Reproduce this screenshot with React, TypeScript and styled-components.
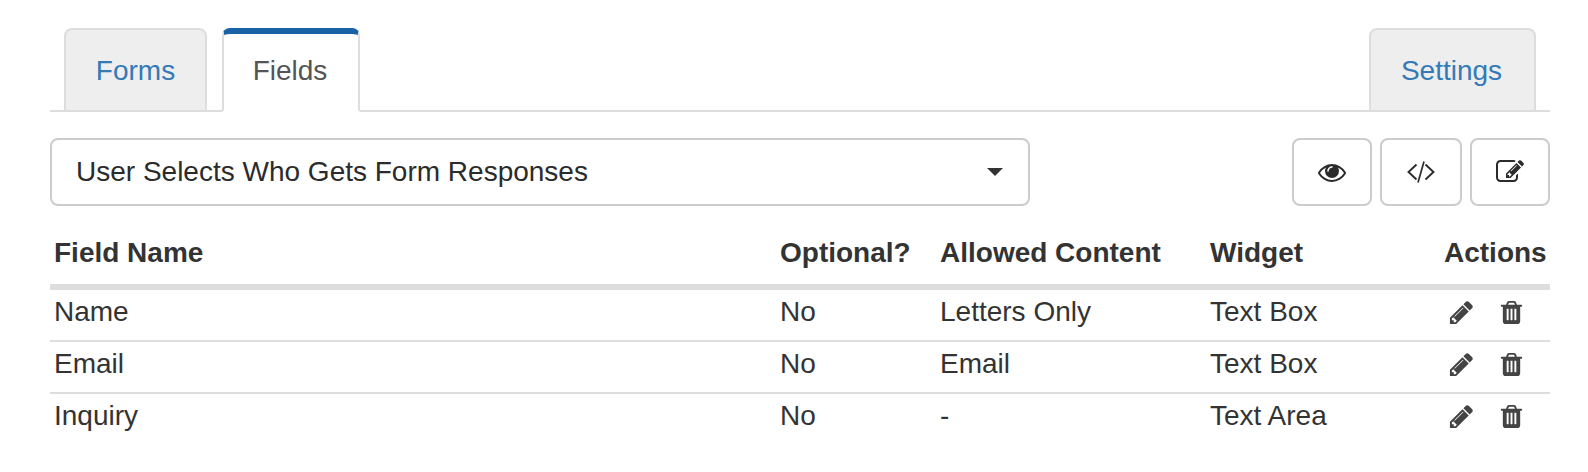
import React from 'react';
import styled, { createGlobalStyle } from 'styled-components';

const GlobalStyle = createGlobalStyle`
  html, body {
    margin: 0;
    padding: 0;
    background: #fff;
  }
  body {
    font-family: "Liberation Sans", Arial, sans-serif;
    font-size: 28px;
    color: #333;
  }
`;

const PENCIL =
  'M491 1536l91-91-235-235-91 91v107h128v128h107zm523-928q0-22-22-22-10 0-17 7l-542 542q-7 7-7 17 0 22 22 22 10 0 17-7l542-542q7-7 7-17zm-54-192l416 416-832 832h-416v-416zm683 96q0 53-37 90l-166 166-416-416 166-165q36-38 90-38 53 0 91 38l235 234q37 39 37 91z';
const TRASH =
  'M704 1376v-704q0-14-9-23t-23-9h-64q-14 0-23 9t-9 23v704q0 14 9 23t23 9h64q14 0 23-9t9-23zm256 0v-704q0-14-9-23t-23-9h-64q-14 0-23 9t-9 23v704q0 14 9 23t23 9h64q14 0 23-9t9-23zm256 0v-704q0-14-9-23t-23-9h-64q-14 0-23 9t-9 23v704q0 14 9 23t23 9h64q14 0 23-9t9-23zm-544-992h448l-48-117q-7-9-17-11h-317q-10 2-17 11zm928 32v64q0 14-9 23t-23 9h-96v948q0 83-47 143.5t-113 60.5h-832q-66 0-113-58.5t-47-141.5v-952h-96q-14 0-23-9t-9-23v-64q0-14 9-23t23-9h309l70-167q15-37 54-63t79-26h320q40 0 79 26t54 63l70 167h309q14 0 23 9t9 23z';
const EYE =
  'M1664 960q-152-236-381-353 61 104 61 225 0 185-131.5 316.5t-316.5 131.5-316.5-131.5-131.5-316.5q0-121 61-225-229 117-381 353 133 205 333.5 326.5t434.5 121.5 434.5-121.5 333.5-326.5zm-720-384q0-20-14-34t-34-14q-125 0-214.5 89.5t-89.5 214.5q0 20 14 34t34 14 34-14 14-34q0-86 61-147t147-61q20 0 34-14t14-34zm848 384q0 34-20 69-140 230-376.5 368.5t-499.5 138.5-499.5-139-376.5-368q-20-35-20-69t20-69q140-229 376.5-368t499.5-139 499.5 139 376.5 368q20 35 20 69z';
const EDIT =
  'M888 1184l116-116-152-152-116 116v56h96v96h56zm440-720q-16-16-33 1l-350 350q-17 17-1 33t33-1l350-350q17-17 1-33zm80 594v190q0 119-84.5 203.5t-203.5 84.5h-832q-119 0-203.5-84.5t-84.5-203.5v-832q0-119 84.5-203.5t203.5-84.5h832q63 0 117 25 15 7 18 23 3 17-9 29l-49 49q-14 14-32 8-23-6-45-6h-832q-66 0-113 47t-47 113v832q0 66 47 113t113 47h832q66 0 113-47t47-113v-126q0-13 9-22l64-64q15-15 35-7t20 29zm-96-738l288 288-672 672h-288v-288zm444 132l-92 92-288-288 92-92q28-28 68-28t68 28l152 152q28 28 28 68t-28 68z';

const Icon = ({ d, size }: { d: string; size: number }) => (
  <svg width={size} height={size} viewBox="0 0 1792 1792" fill="currentColor">
    <path d={d} />
  </svg>
);

const CodeIcon = () => (
  <svg width="28" height="22" viewBox="0 0 28 22" fill="none" stroke="currentColor" strokeWidth="1.9">
    <path d="M9.5 3.5 L1.5 11 L9.5 18.5" />
    <path d="M17 0.5 L11 21.5" strokeWidth="1.7" />
    <path d="M18.5 3.5 L26.5 11 L18.5 18.5" />
  </svg>
);

const rows = [
  { name: 'Name', optional: 'No', content: 'Letters Only', widget: 'Text Box' },
  { name: 'Email', optional: 'No', content: 'Email', widget: 'Text Box' },
  { name: 'Inquiry', optional: 'No', content: '-', widget: 'Text Area' },
];

export default function App() {
  return (
    <Page>
      <GlobalStyle />
      <TabBar>
        <Tab>Forms</Tab>
        <ActiveTab>Fields</ActiveTab>
        <SettingsTab>Settings</SettingsTab>
      </TabBar>
      <Toolbar>
        <SelectBox>
          <span>User Selects Who Gets Form Responses</span>
          <Caret />
        </SelectBox>
        <ButtonGroup>
          <IconButton $width={80}>
            <Icon d={EYE} size={28} />
          </IconButton>
          <IconButton $width={82}>
            <CodeIcon />
          </IconButton>
          <IconButton $width={80}>
            <Icon d={EDIT} size={28} />
          </IconButton>
        </ButtonGroup>
      </Toolbar>
      <Table>
        <colgroup>
          <col width="726" />
          <col width="160" />
          <col width="270" />
          <col width="234" />
          <col width="110" />
        </colgroup>
        <thead>
          <tr>
            <HeadCell>Field Name</HeadCell>
            <HeadCell>Optional?</HeadCell>
            <HeadCell>Allowed Content</HeadCell>
            <HeadCell>Widget</HeadCell>
            <HeadCell>Actions</HeadCell>
          </tr>
        </thead>
        <tbody>
          {rows.map((row) => (
            <tr key={row.name}>
              <BodyCell>{row.name}</BodyCell>
              <BodyCell>{row.optional}</BodyCell>
              <BodyCell>{row.content}</BodyCell>
              <BodyCell>{row.widget}</BodyCell>
              <BodyCell>
                <Actions>
                  <Icon d={PENCIL} size={27} />
                  <Icon d={TRASH} size={27} />
                </Actions>
              </BodyCell>
            </tr>
          ))}
        </tbody>
      </Table>
    </Page>
  );
}

const Page = styled.div`
  width: 1500px;
  margin-left: 50px;
  padding-top: 28px;
`;

const TabBar = styled.div`
  display: flex;
  align-items: flex-end;
  box-sizing: border-box;
  height: 84px;
  padding-left: 14px;
  gap: 15px;
  border-bottom: 2px solid #ddd;
`;

const Tab = styled.a`
  display: flex;
  align-items: center;
  justify-content: center;
  box-sizing: border-box;
  height: 84px;
  width: 143px;
  margin-bottom: -2px;
  padding-top: 2px;
  color: #337ab7;
  background: #eee;
  border: 2px solid #ddd;
  border-radius: 8px 8px 0 0;
`;

const ActiveTab = styled(Tab)`
  width: 138px;
  padding: 0 2px 2px 0;
  color: #555;
  background: #fff;
  border-top: 6px solid #1a62a6;
  border-bottom: 2px solid #fff;
`;

const SettingsTab = styled(Tab)`
  width: 167px;
  margin-left: auto;
  margin-right: 14px;
  padding-right: 2px;
`;

const Toolbar = styled.div`
  display: flex;
  align-items: flex-start;
  justify-content: space-between;
  margin-top: 26px;
`;

const SelectBox = styled.div`
  display: flex;
  align-items: center;
  justify-content: space-between;
  box-sizing: border-box;
  width: 980px;
  height: 68px;
  padding: 0 25px 0 24px;
  color: #2b2b2b;
  border: 2px solid #ccc;
  border-radius: 8px;
`;

const Caret = styled.span`
  width: 0;
  height: 0;
  border-left: 8px solid transparent;
  border-right: 8px solid transparent;
  border-top: 8px solid #333;
`;

const ButtonGroup = styled.div`
  display: flex;
  gap: 8px;
`;

const IconButton = styled.button<{ $width: number }>`
  display: flex;
  align-items: center;
  justify-content: center;
  box-sizing: border-box;
  width: ${({ $width }) => $width}px;
  height: 68px;
  padding: 0;
  color: #2b2b2b;
  background: #fff;
  border: 2px solid #ccc;
  border-radius: 8px;
`;

const Table = styled.table`
  width: 1500px;
  margin-top: 18px;
  table-layout: fixed;
  border-collapse: separate;
  border-spacing: 0;
  font-size: 28px;
`;

const HeadCell = styled.th`
  box-sizing: border-box;
  height: 66px;
  padding: 0 4px 3px;
  text-align: left;
  font-weight: 700;
  color: #333;
  border-bottom: 6px solid #ddd;
`;

const BodyCell = styled.td`
  box-sizing: border-box;
  height: 52px;
  padding: 0 4px 6px;
  color: #333;
  border-bottom: 2px solid #ddd;

  tr:last-child & {
    border-bottom: none;
    padding-bottom: 8px;
  }
`;

const Actions = styled.div`
  display: flex;
  align-items: center;
  gap: 23px;
  padding-left: 4px;
  color: #444;
`;
